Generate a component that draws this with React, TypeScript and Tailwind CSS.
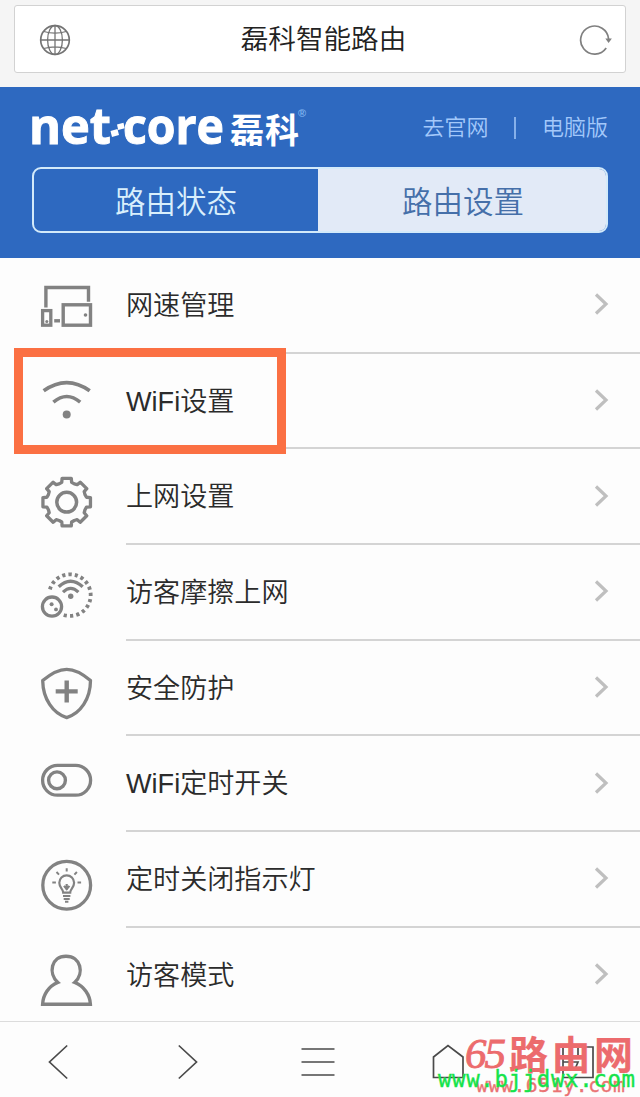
import React from 'react';
import clsx from 'clsx';

interface MenuItem {
  label: string;
  icon: React.ReactNode;
  highlighted?: boolean;
}

// Eight-tooth gear outline around (28.7, 27.2)
const gearPoints = Array.from({ length: 8 }, (_, i) => {
  const tooth: [number, number][] = [
    [-22.5, 19.8],
    [-14, 20.4],
    [-11, 24.2],
    [11, 24.2],
    [14, 20.4],
  ];
  return tooth
    .map(([offset, radius]) => {
      const angle = ((i * 45 + offset) * Math.PI) / 180;
      return `${(28.7 + radius * Math.sin(angle)).toFixed(2)},${(27.2 - radius * Math.cos(angle)).toFixed(2)}`;
    })
    .join(' ');
}).join(' ');

const MenuIcon: React.FC<{ children: React.ReactNode }> = ({ children }) => (
  <svg
    viewBox="0 0 58 58"
    className="w-[58px] h-[58px] mt-[25.5px] ml-[38px] shrink-0 text-[#828282]"
    fill="none"
    stroke="currentColor"
    strokeWidth="3.3"
  >
    {children}
  </svg>
);

const items: MenuItem[] = [
  {
    label: '网速管理',
    icon: (
      <MenuIcon>
        <path d="M7.9 23.4V3.5h42.6v14.2" strokeWidth="3.4" />
        <rect x="4.6" y="26.6" width="8.2" height="14.6" />
        <rect x="25.2" y="20.8" width="27.3" height="20.4" strokeWidth="3.4" />
        <path d="M16.2 36.8h5.8" strokeWidth="3.4" />
        <circle cx="47.5" cy="31" r="1.8" fill="currentColor" stroke="none" />
        <circle cx="8.8" cy="37.5" r="1.5" fill="currentColor" stroke="none" />
      </MenuIcon>
    ),
  },
  {
    label: 'WiFi设置',
    highlighted: true,
    icon: (
      <MenuIcon>
        <path d="M5.7 11.8Q28.7-4.6 51.7 11.8" strokeWidth="3.8" />
        <path d="M15.4 23.2Q28.7 11.8 42.2 23.2" strokeWidth="3.6" />
        <circle cx="28.7" cy="35.4" r="4" fill="currentColor" stroke="none" />
      </MenuIcon>
    ),
  },
  {
    label: '上网设置',
    icon: (
      <MenuIcon>
        <polygon points={gearPoints} strokeLinejoin="round" />
        <circle cx="28.7" cy="27.2" r="9.9" strokeWidth="3.5" />
      </MenuIcon>
    ),
  },
  {
    label: '访客摩擦上网',
    icon: (
      <MenuIcon>
        <path d="M11.9 18.4A20.8 20.8 0 1 1 24 43.4" strokeWidth="3.8" strokeDasharray="3.2 3.1" />
        <path d="M20.7 15.8Q32.5 4.8 44.7 15.8" strokeWidth="3.4" />
        <path d="M25 21.2Q32.7 13.6 40.4 21.2" strokeWidth="3.2" />
        <circle cx="32.7" cy="25.2" r="2.7" fill="currentColor" stroke="none" />
        <circle cx="14" cy="35.6" r="9.6" />
        <circle cx="13.6" cy="33.2" r="2" fill="currentColor" stroke="none" />
        <circle cx="18" cy="38.4" r="1.9" fill="currentColor" stroke="none" />
      </MenuIcon>
    ),
  },
  {
    label: '安全防护',
    icon: (
      <MenuIcon>
        <path
          d="M28.7 3.3C36.5 3.3 45 8 52.5 14.6C52.4 33 42.5 47.5 28.7 51.6C14.9 47.5 5 33 4.7 14.6C12.4 8 20.9 3.3 28.7 3.3Z"
          strokeLinejoin="round"
        />
        <path d="M17.7 25.4h22M28.7 14.4v22" strokeWidth="4.4" />
      </MenuIcon>
    ),
  },
  {
    label: 'WiFi定时开关',
    icon: (
      <MenuIcon>
        <rect x="4.6" y="3.4" width="48" height="29.8" rx="14.9" />
        <circle cx="19" cy="18.3" r="8.4" strokeWidth="3.4" />
      </MenuIcon>
    ),
  },
  {
    label: '定时关闭指示灯',
    icon: (
      <MenuIcon>
        <circle cx="28.7" cy="27.3" r="23.9" />
        <path
          d="M25.2 34.6c0-3.6-3.9-4.5-3.9-9.8a7.4 7.4 0 0 1 14.8 0c0 5.3-3.9 6.2-3.9 9.8zM28.7 31.9v-6M26 27.9l2.7 3.2l2.7-3.2"
          strokeWidth="2.2"
        />
        <path d="M25 38h7.4M25.7 41h6M27 43.7h3.4" strokeWidth="2" />
        <path
          d="M28.7 13.6v-3.4M21 16.6l-2.5-2.6M36.4 16.6l2.5-2.6M17.9 24.4h-3.6M39.5 24.4h3.6"
          strokeWidth="2"
        />
      </MenuIcon>
    ),
  },
  {
    label: '访客模式',
    icon: (
      <MenuIcon>
        <path
          d="M4.6 51.2C5 42 10.5 33 19.8 29.5C10 20.5 13 3.3 28 3.3C43 3.3 46.5 20.5 36.7 29.5C46 33 52 42 52.4 51.2Z"
          strokeWidth="3.4"
        />
      </MenuIcon>
    ),
  },
];

const AddressBar = () => (
  <div className="h-[87px] bg-[#f5f5f5] px-[14px] pt-[5px] shrink-0">
    <div className="h-[68px] flex items-center justify-between bg-white border border-[#d2d2d2] rounded-[3px] pl-6 pr-3.5">
      <svg viewBox="0 0 32 32" className="w-8 h-8 mt-0.5" fill="none" stroke="#747474" strokeWidth="1.3">
        <circle cx="16" cy="16" r="14.3" strokeWidth="1.7" />
        <ellipse cx="16" cy="16" rx="7.4" ry="14.5" />
        <path d="M16 1.5v29M1.5 16h29M4.8 7.5q11.2 3.4 22.4 0M4.8 24.5q11.2-3.4 22.4 0" />
      </svg>
      <h1 className="text-[27.6px] leading-8 text-[#222] font-[350] mr-0.5 mt-0.5">磊科智能路由</h1>
      <svg viewBox="0 0 34 32" className="w-[34px] h-8 mt-0.5 -mr-px" fill="none" stroke="#808080" strokeWidth="1.7">
        <path d="M28.2 24A14 14 0 1 1 30.6 15" />
        <path d="M27.3 14.4h6.6l-3.3 4.6z" fill="#808080" stroke="none" />
      </svg>
    </div>
  </div>
);

const Header = () => (
  <header className="h-[171px] bg-[#2e69c0] px-8 shrink-0">
    <div className="h-[80px] flex items-center justify-between">
      <svg viewBox="0 0 280 76" className="w-[280px] h-[76px] font-bold" fill="#fff">
        <g fontFamily="'Open Sans', sans-serif" fontSize="50" stroke="#fff" strokeWidth="1">
          <text x="-3" y="54.8" textLength="82" lengthAdjust="spacingAndGlyphs">net</text>
          <text x="91" y="54.8" textLength="101" lengthAdjust="spacingAndGlyphs">core</text>
        </g>
        <path d="M78.5 42l7-2 1.5 6-7 2zM85 35.5l6.5-1.8 1.2 5.6-6.5 1.8z" />
        <text x="198" y="53.5" fontFamily="'Noto Sans CJK SC', sans-serif" fontSize="34" textLength="69">磊科</text>
        <text x="266" y="27.5" fontFamily="'Liberation Sans', sans-serif" fontSize="11" fill="#7fb3ef">®</text>
      </svg>
      <nav className="flex items-center text-[22px] leading-7 font-[350] text-[#a3c8fa] mt-0.5">
        <a>去官网</a>
        <span className="w-[1.5px] h-[22px] bg-[#86b0ea] mx-[26px]" />
        <a>电脑版</a>
      </nav>
    </div>
    <div className="h-[66px] flex border-2 border-[#d3eafa] rounded-[9px] overflow-hidden text-[30.5px] leading-10 font-[350]">
      <button className="w-[284px] pt-1 text-[#d9effc]">路由状态</button>
      <button className="flex-1 pt-1 pl-0.5 bg-[#e2eaf7] text-[#456fa9]">路由设置</button>
    </div>
  </header>
);

const MenuRow: React.FC<MenuItem> = ({ label, icon, highlighted }) => (
  <li className="relative h-[95.7px] flex items-start">
    {icon}
    <div className="h-full flex-1 ml-[30px] pr-7 flex items-center justify-between border-b-2 border-[#d4d4d4]">
      <span className="text-[27.1px] leading-8 pt-0.5 text-[#2b2b2b] font-[350]">{label}</span>
      <svg viewBox="0 0 20 26" className="w-5 h-[26px] mb-px" fill="none" stroke="#bfbfbf" strokeWidth="3.2">
        <path d="M4 3.5l10 9.5l-10 9.5" />
      </svg>
    </div>
    {highlighted && (
      <div className="absolute left-[14px] -top-[6px] w-[272px] h-[106px] border-[9.5px] border-[#fb7043] z-10" />
    )}
  </li>
);

const BottomBar = () => (
  <footer className="relative h-[76px] bg-[#fdfdfd] border-t-[1.5px] border-[#dcdcdc] shrink-0 z-10">
    <div className="h-full flex items-center justify-between pl-10 pr-[42px] pt-[5px]">
      {[
        'M27.2 1.5L9.5 18l17.7 16.5',
        'M8.8 1.5L26.5 18L8.8 34.5',
        'M1.5 5h33M1.5 18h33M1.5 31h33',
        'M3.5 33.5V13L18 1.5L33 13v20.5z',
        'M3 3h30v30.5H3zM18 3v12M3 18h15l-3 7',
      ].map((d, i) => (
        <svg
          key={i}
          viewBox="0 0 36 36"
          className={clsx('w-9 h-9', i === 4 && 'mr-0.5')}
          fill="none"
          stroke="#4a4a4a"
          strokeWidth="1.7"
        >
          <path d={d} />
        </svg>
      ))}
    </div>
    {/* Site watermark over the toolbar */}
    <svg viewBox="0 0 210 76" className="absolute right-0 bottom-0 w-[210px] h-[76px]">
      <g fill="#ec6b6d" stroke="#ec6b6d">
        <text x="35" y="47" fontFamily="'Liberation Serif', serif" fontSize="43" fontStyle="italic" strokeWidth="0.9" textLength="41">65</text>
        <text x="79" y="48" fontFamily="'Noto Sans CJK SC', sans-serif" fontSize="39" fontWeight="700" strokeWidth="0.2" textLength="124">路由网</text>
      </g>
      <g fontFamily="'DejaVu Sans Mono', monospace">
        <text x="46" y="71" fontSize="19.8" fill="#ea7273" stroke="#ea7273" strokeWidth="0.3" textLength="149">www.651y.com</text>
        <text x="8" y="66" fontSize="22.4" fill="#15e34a" stroke="#15e34a" strokeWidth="0.4" textLength="197">www.bjjdwx.com</text>
      </g>
    </svg>
  </footer>
);

export default function App() {
  return (
    <div className="w-[640px] h-[1097px] flex flex-col overflow-hidden bg-[#fdfdfd] font-['Liberation_Sans','Noto_Sans_CJK_SC',sans-serif]">
      <AddressBar />
      <Header />
      <ul className="h-[763px] overflow-hidden shrink-0">
        {items.map((item) => (
          <MenuRow key={item.label} {...item} />
        ))}
      </ul>
      <BottomBar />
    </div>
  );
}
